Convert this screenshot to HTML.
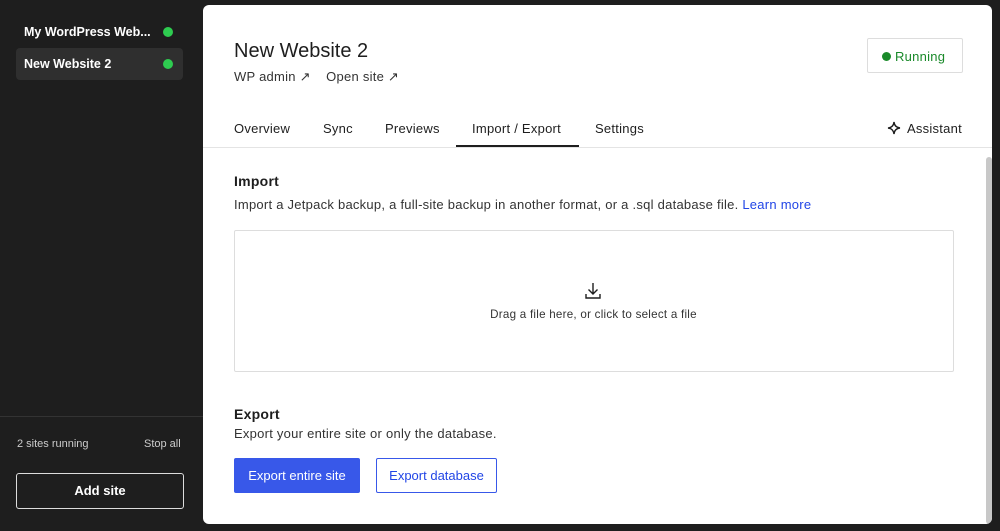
<!DOCTYPE html>
<html><head><meta charset="utf-8"><style>
*{box-sizing:border-box;margin:0;padding:0}
body{width:1000px;height:531px;background:#1e1e1e;font-family:"Liberation Sans",sans-serif;position:relative;overflow:hidden;color:#1e1e1e}
.abs{position:absolute}
.side-item{position:absolute;left:16px;width:167px;height:32px;border-radius:4px;color:#fff;font-size:12.5px;font-weight:bold;padding:9px 0 0 8px}
.dot{position:absolute;right:10px;top:11px;width:10px;height:10px;border-radius:50%;background:#2ecc50}
.main{position:absolute;left:203px;top:5px;width:789px;height:519px;background:#fff;border-radius:6px;overflow:hidden;letter-spacing:0.25px}
.tab{position:absolute;top:116px;font-size:13px}
</style></head><body>
<div class="side-item" style="top:16px">My WordPress Web...<span class="dot"></span></div>
<div class="side-item" style="top:48px;background:#2f2f2f">New Website 2<span class="dot"></span></div>
<div class="abs" style="left:0;top:416px;width:203px;height:1px;background:#333"></div>
<div class="abs" style="left:17px;top:438px;font-size:11px;color:#ccc">2 sites running</div>
<div class="abs" style="left:144px;top:438px;font-size:11px;color:#ccc">Stop all</div>
<div class="abs" style="left:16px;top:473px;width:168px;height:36px;border:1.5px solid #ddd;border-radius:3px;color:#fff;font-size:13px;font-weight:bold;text-align:center;line-height:33px">Add site</div>

<div class="main">
  <div class="abs" style="left:31px;top:35px;font-size:20px;letter-spacing:0">New Website 2</div>
  <div class="abs" style="left:31px;top:64px;font-size:13px;color:#333">WP admin ↗&nbsp;&nbsp;&nbsp;&nbsp;Open site ↗</div>
  <div class="abs" style="left:664px;top:33px;width:96px;height:35px;border:1px solid #ddd;border-radius:2px;font-size:13px;color:#1a8a2a;padding:10px 0 0 14px"><span style="display:inline-block;width:9px;height:9px;border-radius:50%;background:#1a8a2a;margin-right:4px"></span>Running</div>
  <div class="tab" style="left:31px">Overview</div>
  <div class="tab" style="left:120px">Sync</div>
  <div class="tab" style="left:182px">Previews</div>
  <div class="tab" style="left:269px">Import / Export</div>
  <div class="abs" style="left:253px;top:140px;width:123px;height:2px;background:#1e1e1e"></div>
  <div class="tab" style="left:392px">Settings</div>
  <div class="tab" style="left:684px"><svg width="14" height="14" viewBox="0 0 14 14" style="vertical-align:-2px;margin-right:6px"><path d="M7 1 Q7.6 6.4 13 7 Q7.6 7.6 7 13 Q6.4 7.6 1 7 Q6.4 6.4 7 1Z" fill="none" stroke="#1e1e1e" stroke-width="1.4"/></svg>Assistant</div>
  <div class="abs" style="left:0;top:142px;width:789px;height:1px;background:#e4e4e4"></div>
  <div class="abs" style="left:783px;top:152px;width:6px;height:367px;background:#c8c8c8;border-radius:3px"></div>
  <div class="abs" style="left:31px;top:168px;font-size:14px;font-weight:bold">Import</div>
  <div class="abs" style="left:31px;top:192px;font-size:13px;color:#333">Import a Jetpack backup, a full-site backup in another format, or a .sql database file. <span style="color:#2145e6">Learn more</span></div>
  <div class="abs" style="left:31px;top:225px;width:720px;height:142px;border:1px solid #ddd;border-radius:2px"></div>
  <svg class="abs" style="left:381px;top:277px" width="18" height="18" viewBox="0 0 18 18"><path d="M9 1V12M4.5 7.5 9 12 13.5 7.5M2 12V16H16V12" fill="none" stroke="#1e1e1e" stroke-width="1.4"/></svg>
  <div class="abs" style="left:0;width:789px;top:303px;font-size:11.6px;text-align:center;color:#333;padding-right:8px">Drag a file here, or click to select a file</div>
  <div class="abs" style="left:31px;top:401px;font-size:14px;font-weight:bold">Export</div>
  <div class="abs" style="left:31px;top:421px;font-size:13px;color:#333">Export your entire site or only the database.</div>
  <div class="abs" style="left:31px;top:453px;width:126px;height:35px;background:#3858e9;border-radius:2px;color:#fff;font-size:13px;text-align:center;line-height:35px;letter-spacing:0">Export entire site</div>
  <div class="abs" style="left:173px;top:453px;width:121px;height:35px;border:1px solid #3858e9;border-radius:2px;color:#2145e6;font-size:13px;text-align:center;line-height:33px;letter-spacing:0">Export database</div>
</div>
</body></html>
